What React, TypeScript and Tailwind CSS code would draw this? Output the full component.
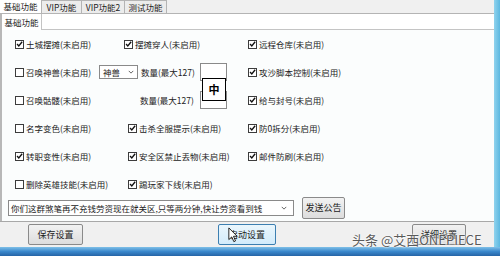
import React from 'react';

const font = { fontFamily: '"Noto Sans CJK SC", "Liberation Sans", sans-serif' };

function Box({ checked }: { checked?: boolean }) {
  return (
    <span className="w-[9px] h-[9px] border border-[#3c3c3c] bg-white flex items-center justify-center shrink-0">
      {checked && (
        <svg viewBox="0 0 10 10" className="w-[8px] h-[8px]">
          <path d="M1.5 5 L4 7.8 L8.8 1.8" stroke="#111" strokeWidth="1.9" fill="none" />
        </svg>
      )}
    </span>
  );
}

function Check({ label, checked, className = '' }: { label: string; checked?: boolean; className?: string }) {
  return (
    <div className={`flex items-center gap-[2px] shrink-0 ${className}`}>
      <Box checked={checked} />
      <span className="text-[8.5px] leading-none text-[#222] whitespace-nowrap">{label}</span>
    </div>
  );
}

function Chevron() {
  return (
    <svg viewBox="0 0 8 5" className="w-[6px] h-[4px] shrink-0">
      <path d="M1 1 L4 4 L7 1" stroke="#444" strokeWidth="1.1" fill="none" />
    </svg>
  );
}

function Btn({ label, hover, className = '' }: { label: string; hover?: boolean; className?: string }) {
  return (
    <div
      className={`h-[21px] flex items-center justify-center text-[9px] text-[#222] border rounded-[2px] shrink-0 ${
        hover
          ? 'bg-gradient-to-b from-[#eaf6fd] to-[#d3ecfb] border-[#3c7fb1]'
          : 'bg-gradient-to-b from-[#f2f2f2] to-[#dddddd] border-[#8a8a8a]'
      } ${className}`}
    >
      {label}
    </div>
  );
}

export default function App() {
  return (
    <div className="w-[500px] h-[256px] flex flex-col bg-[#f0f0f0] relative overflow-hidden" style={font}>
      <div className="flex-1 flex min-h-0">
        <div className="flex-1 flex flex-col min-w-0">
          {/* 顶部标签 */}
          <div className="h-[14px] flex items-end border-b border-[#b4b4b4] text-[8.5px] leading-none text-[#222]">
            <div className="w-[42px] h-[14px] bg-white border-r border-[#b4b4b4] flex items-center justify-center">基础功能</div>
            <div className="w-[40px] h-[13px] bg-[#ececec] border-r border-t border-[#b4b4b4] flex items-center justify-center">VIP功能</div>
            <div className="w-[43px] h-[13px] bg-[#ececec] border-r border-t border-[#b4b4b4] flex items-center justify-center">VIP功能2</div>
            <div className="w-[42px] h-[13px] bg-[#ececec] border-r border-t border-[#b4b4b4] flex items-center justify-center">测试功能</div>
          </div>

          {/* 内层面板 */}
          <div className="flex flex-col border-l-2 border-[#b8b8b8] bg-[#fbfdfd] h-[207px]">
            <div className="h-[16px] flex border-b border-[#c4c4c4] bg-white">
              <div className="w-[40px] h-[16px] border-r border-[#c4c4c4] flex items-center justify-center text-[8.5px] leading-none text-[#222] bg-white">基础功能</div>
            </div>

            <div className="flex flex-col pl-[13px]">
              <div className="h-[28px] flex items-center">
                <Check label="土城摆摊(未启用)" checked className="w-[109px]" />
                <Check label="摆摊穿人(未启用)" checked className="w-[124px]" />
                <Check label="远程仓库(未启用)" checked />
              </div>

              <div className="h-[28px] flex items-center">
                <Check label="召唤神兽(未启用)" className="w-[84px]" />
                <div className="w-[39px] h-[14px] border border-[#8a8a8a] bg-white flex items-center justify-between px-[3px] text-[8.5px] leading-none text-[#222]">
                  <span>神兽</span>
                  <Chevron />
                </div>
                <span className="ml-[3px] w-[56px] text-[8.5px] leading-none text-[#222] whitespace-nowrap">数量(最大127)</span>
                <div className="ml-[3px] w-[27px] h-[18px] border border-[#8a8a8a] bg-white" />
                <div className="w-[21px]" />
                <Check label="攻沙脚本控制(未启用)" checked />
              </div>

              <div className="h-[28px] flex items-center">
                <Check label="召唤骷髅(未启用)" className="w-[125px]" />
                <span className="w-[60px] text-[8.5px] leading-none text-[#222] whitespace-nowrap">数量(最大127)</span>
                <div className="w-[27px] h-[18px] border border-[#8a8a8a] bg-white" />
                <div className="w-[21px]" />
                <Check label="给与封号(未启用)" checked />
              </div>

              <div className="h-[28px] flex items-center">
                <Check label="名字变色(未启用)" className="w-[113px]" />
                <Check label="击杀全服提示(未启用)" checked className="w-[120px]" />
                <Check label="防0拆分(未启用)" checked />
              </div>

              <div className="h-[28px] flex items-center">
                <Check label="转职变性(未启用)" checked className="w-[113px]" />
                <Check label="安全区禁止丢物(未启用)" checked className="w-[120px]" />
                <Check label="邮件防刷(未启用)" checked />
              </div>

              <div className="h-[28px] flex items-center">
                <Check label="删除英雄技能(未启用)" className="w-[113px]" />
                <Check label="踢玩家下线(未启用)" checked />
              </div>
            </div>

            <div className="flex items-center pl-[6px] mt-[-1px] h-[22px]">
              <div className="w-[286px] h-[16px] border border-[#8a8a8a] bg-white flex items-center justify-between pl-[2px] pr-[6px] text-[8.5px] leading-none text-[#222] whitespace-nowrap">
                <span>你们这群煞笔再不充钱劳资现在就关区,只等两分钟,快让劳资看到钱</span>
                <Chevron />
              </div>
              <Btn label="发送公告" className="ml-[8px] w-[43px] h-[22px]" />
            </div>
          </div>

          <div className="border-t border-[#a8a8a8] flex-1 flex items-center">
            <Btn label="保存设置" className="ml-[28px] w-[55px]" />
            <Btn label="启动设置" hover className="ml-[135px] w-[58px]" />
            <Btn label="详细设置" className="ml-[136px] w-[54px]" />
          </div>
        </div>
        <div className="w-[6px] bg-gradient-to-r from-[#8fd3ee] to-[#5cb8e0]" />
      </div>
      <div className="h-[9px] bg-gradient-to-b from-[#7fc0e8] via-[#3a88cc] to-[#2664a6]" />

      {/* 输入法浮窗 */}
      <div className="absolute left-[202px] top-[78px] w-[24px] h-[23px] bg-white border border-black flex items-center justify-center text-[11px] font-bold text-black leading-none">
        中
      </div>

      {/* 鼠标指针 */}
      <svg viewBox="0 0 12 19" className="absolute left-[228px] top-[227px] w-[10px] h-[16px]">
        <path d="M1 1 L1 15 L4.5 11.8 L7 17.5 L9 16.6 L6.6 11 L11 11 Z" fill="white" stroke="black" strokeWidth="1" />
      </svg>

      {/* 水印 */}
      <div className="absolute left-[352px] top-[233px] text-[13px] leading-none text-[#5a5a5a] whitespace-nowrap [text-shadow:0_0_2px_#fff,0_0_2px_#fff]">
        头条 @艾西ONEPIECE
      </div>
    </div>
  );
}
